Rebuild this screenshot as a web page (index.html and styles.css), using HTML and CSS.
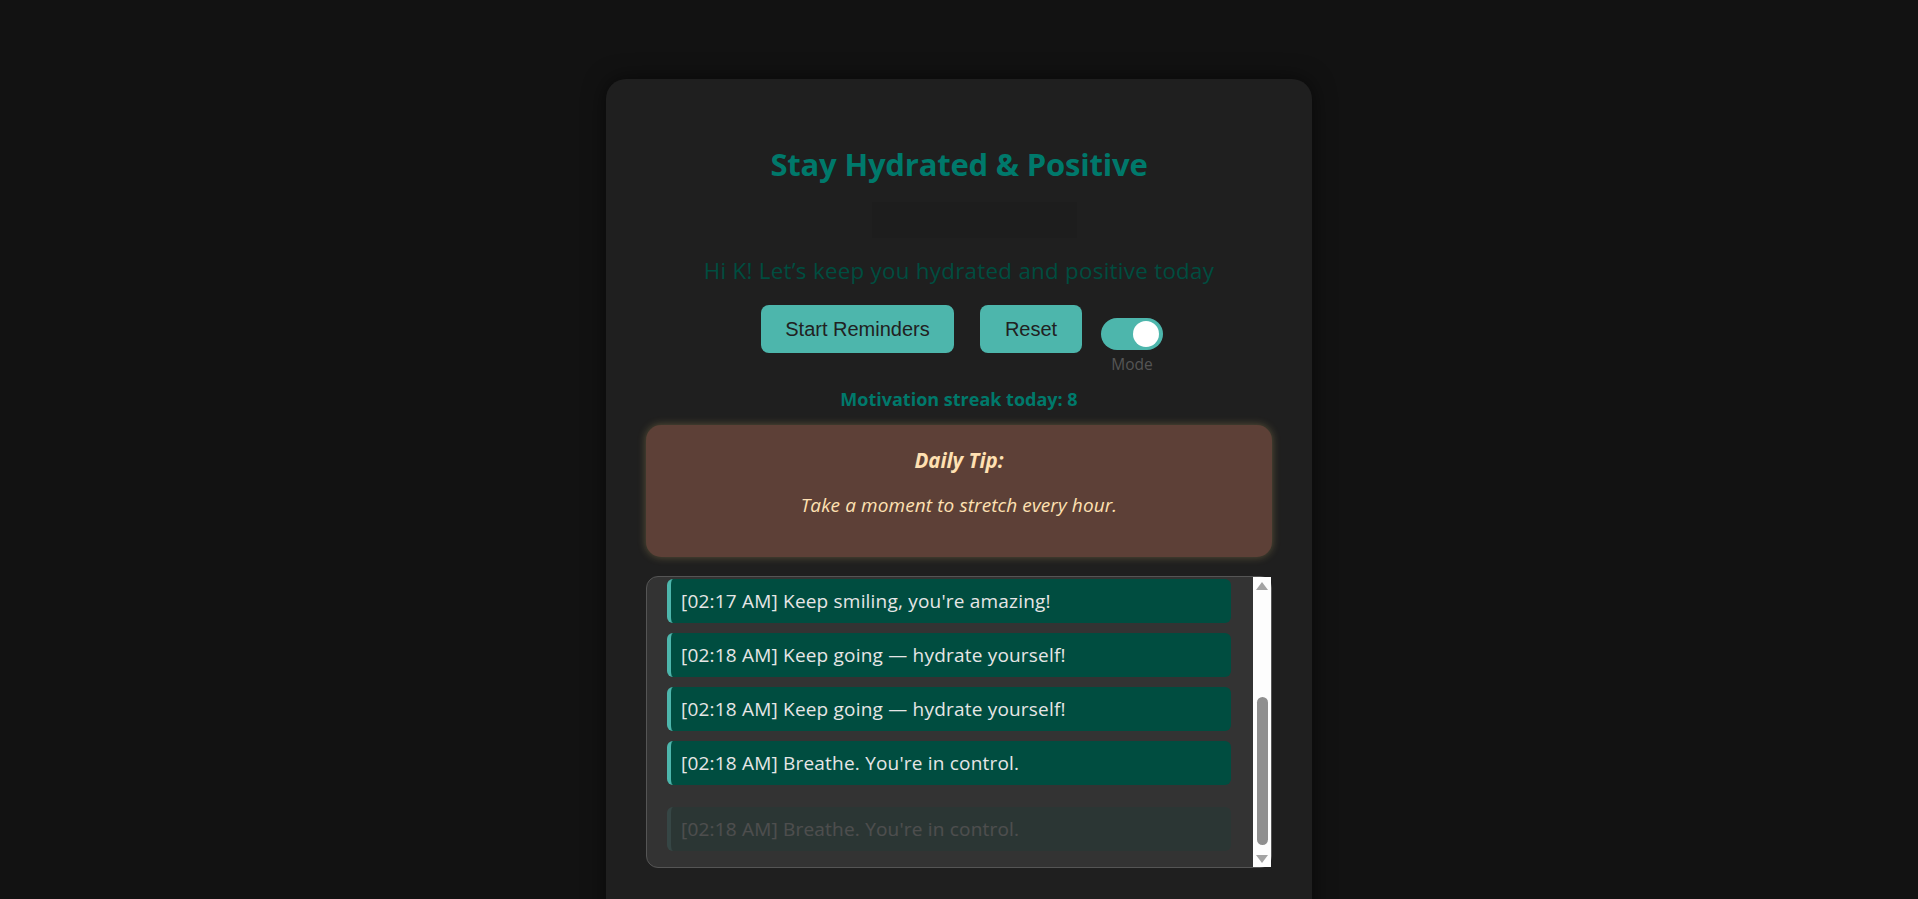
FILE: index.html
```html
<!DOCTYPE html>
<html lang="en">
<head>
<meta charset="utf-8">
<title>Stay Hydrated &amp; Positive</title>
<link rel="stylesheet" href="styles.css">
</head>
<body>
<main class="card">
  <h1 class="title">Stay Hydrated &amp; Positive</h1>
  <div class="banner"></div>
  <p class="greeting">Hi K! Let’s keep you hydrated and positive today</p>
  <div class="controls">
    <button class="btn btn-start">Start Reminders</button>
    <button class="btn btn-reset">Reset</button>
    <div class="mode">
      <div class="toggle"><span class="knob"></span></div>
      <span class="mode-label">Mode</span>
    </div>
  </div>
  <p class="streak">Motivation streak today: 8</p>
  <section class="tip">
    <p class="tip-title">Daily Tip:</p>
    <p class="tip-text">Take a moment to stretch every hour.</p>
  </section>
  <section class="log">
    <div class="log-list">
      <div class="log-item">[02:17 AM] Keep smiling, you're amazing!</div>
      <div class="log-item">[02:18 AM] Keep going — hydrate yourself!</div>
      <div class="log-item">[02:18 AM] Keep going — hydrate yourself!</div>
      <div class="log-item">[02:18 AM] Breathe. You're in control.</div>
      <div class="log-item log-item-new">[02:18 AM] Breathe. You're in control.</div>
    </div>
    <div class="scrollbar">
      <div class="sb-btn"><span class="arrow-up"></span></div>
      <div class="sb-track"><div class="sb-thumb"></div></div>
      <div class="sb-btn"><span class="arrow-down"></span></div>
    </div>
  </section>
</main>
</body>
</html>
```

FILE: styles.css
```css
html, body {
  margin: 0;
  padding: 0;
  overflow: hidden;
}

body {
  background: #121212;
  font-family: "Open Sans", "Noto Sans", sans-serif;
  height: 899px;
}

.card {
  box-sizing: border-box;
  width: 706px;
  height: 900px;
  margin: 79px auto 0;
  padding: 64px 40px 40px;
  background: #1f1f1f;
  border-radius: 20px;
  box-shadow: 0 0 22px rgba(0, 0, 0, 0.55);
  text-align: center;
}

.title {
  margin: 0;
  font-size: 31px;
  line-height: 43px;
  font-weight: 700;
  color: #00796b;
  letter-spacing: -0.2px;
}

.banner {
  width: 205px;
  height: 36px;
  margin: 16px 0 0 226px;
  background: #1d1d1d;
}

.greeting {
  margin: 18px 0 0;
  font-size: 22.3px;
  line-height: 29px;
  letter-spacing: 0.3px;
  color: #004d40;
}

.controls {
  display: flex;
  justify-content: center;
  align-items: flex-start;
  margin-top: 20px;
  padding-left: 6px;
}

.btn {
  height: 48px;
  padding: 0;
  border: none;
  border-radius: 8px;
  background: #4db6ac;
  color: #212121;
  font-family: "Liberation Sans", Arial, sans-serif;
  font-size: 20px;
}

.btn-start {
  width: 193px;
  margin-right: 26px;
}

.btn-reset {
  width: 102px;
  margin-right: 19px;
}

.mode {
  display: flex;
  flex-direction: column;
  align-items: center;
  width: 62px;
  margin-top: 13px;
}

.toggle {
  box-sizing: border-box;
  display: flex;
  justify-content: flex-end;
  align-items: center;
  width: 62px;
  height: 32px;
  padding: 0 4px;
  border-radius: 16px;
  background: #4db6ac;
}

.knob {
  width: 26px;
  height: 26px;
  border-radius: 50%;
  background: #ffffff;
}

.mode-label {
  margin-top: 4px;
  font-size: 15.5px;
  line-height: 20px;
  color: #555555;
}

.streak {
  margin: 13px 0 0;
  font-size: 18px;
  line-height: 24px;
  font-weight: 700;
  color: #00796b;
}

.tip {
  box-sizing: border-box;
  height: 132px;
  margin-top: 14px;
  padding: 22px 20px 40px;
  background: #5d4037;
  border-radius: 15px;
  box-shadow: 0 0 8px rgba(255, 224, 130, 0.28);
  color: #ffe0b2;
}

.tip-title {
  margin: 0;
  font-size: 20.5px;
  line-height: 26px;
  font-weight: 700;
  font-style: italic;
}

.tip-text {
  margin: 20px 0 0;
  font-size: 19px;
  line-height: 24px;
  font-style: italic;
  letter-spacing: 0.1px;
}

.log {
  box-sizing: border-box;
  display: flex;
  height: 292px;
  margin-top: 19px;
  background: #333333;
  border: 1px solid #555555;
  border-radius: 12px;
  text-align: left;
}

.log-list {
  flex: 1;
  padding: 2px 22px 0 20px;
  overflow: hidden;
  border-radius: 11px 0 0 11px;
}

.log-item {
  height: 44px;
  margin-bottom: 10px;
  padding: 0 10px;
  border-left: 4px solid #4db6ac;
  border-radius: 6px;
  background: #004d40;
  color: #e6e6e6;
  font-size: 19px;
  line-height: 44px;
  letter-spacing: 0.2px;
  white-space: nowrap;
}

.log-item-new {
  margin-top: 22px;
  opacity: 0.15;
}

.scrollbar {
  display: flex;
  flex-direction: column;
  width: 18px;
  background: #fdfdfd;
}

.sb-btn {
  display: flex;
  justify-content: center;
  align-items: center;
  height: 17px;
}

.arrow-up,
.arrow-down {
  width: 0;
  height: 0;
  border-left: 6px solid transparent;
  border-right: 6px solid transparent;
}

.arrow-up {
  border-bottom: 8px solid #a3a3a3;
}

.arrow-down {
  border-top: 8px solid #a3a3a3;
}

.sb-track {
  flex: 1;
  display: flex;
  justify-content: center;
  padding-top: 103px;
}

.sb-thumb {
  width: 11px;
  height: 148px;
  border-radius: 6px;
  background: #8f8f8f;
}
```
